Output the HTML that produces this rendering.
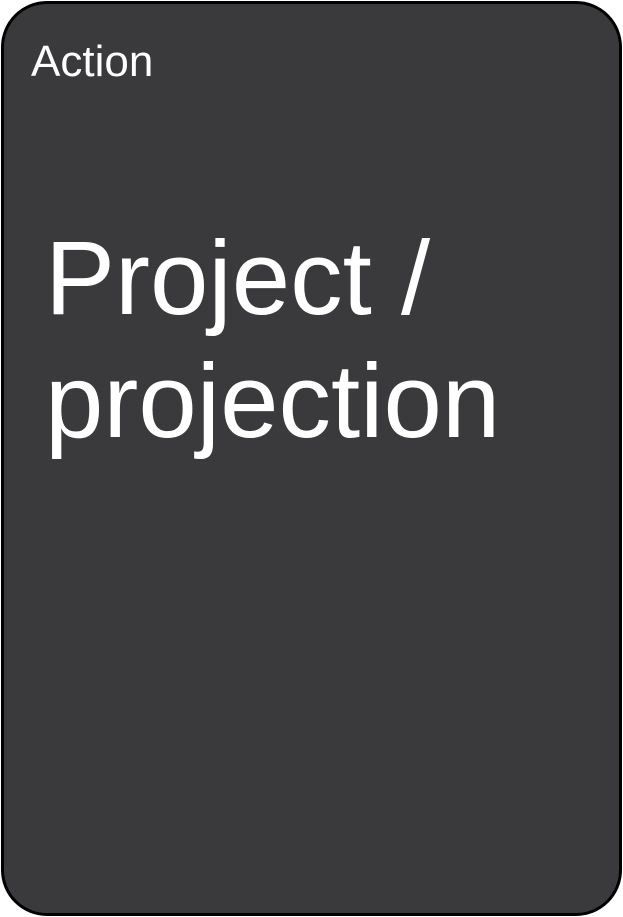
<!DOCTYPE html>
<html><head><style>
html,body{margin:0;padding:0;width:623px;height:917px;background:#fff;overflow:hidden}
.card{position:absolute;left:1px;top:1px;width:615px;height:909px;border:3px solid #000;border-radius:46px;background:#3a3a3c}
.a{position:absolute;left:31px;top:37px;font:44px "Liberation Sans",sans-serif;color:#fff;line-height:50px}
.t{position:absolute;left:45px;top:217px;font:105px "Liberation Sans",sans-serif;color:#fff;line-height:123px}
</style></head><body>
<div class="card"></div>
<div class="a">Action</div>
<div class="t">Project /<br>projection</div>
</body></html>
